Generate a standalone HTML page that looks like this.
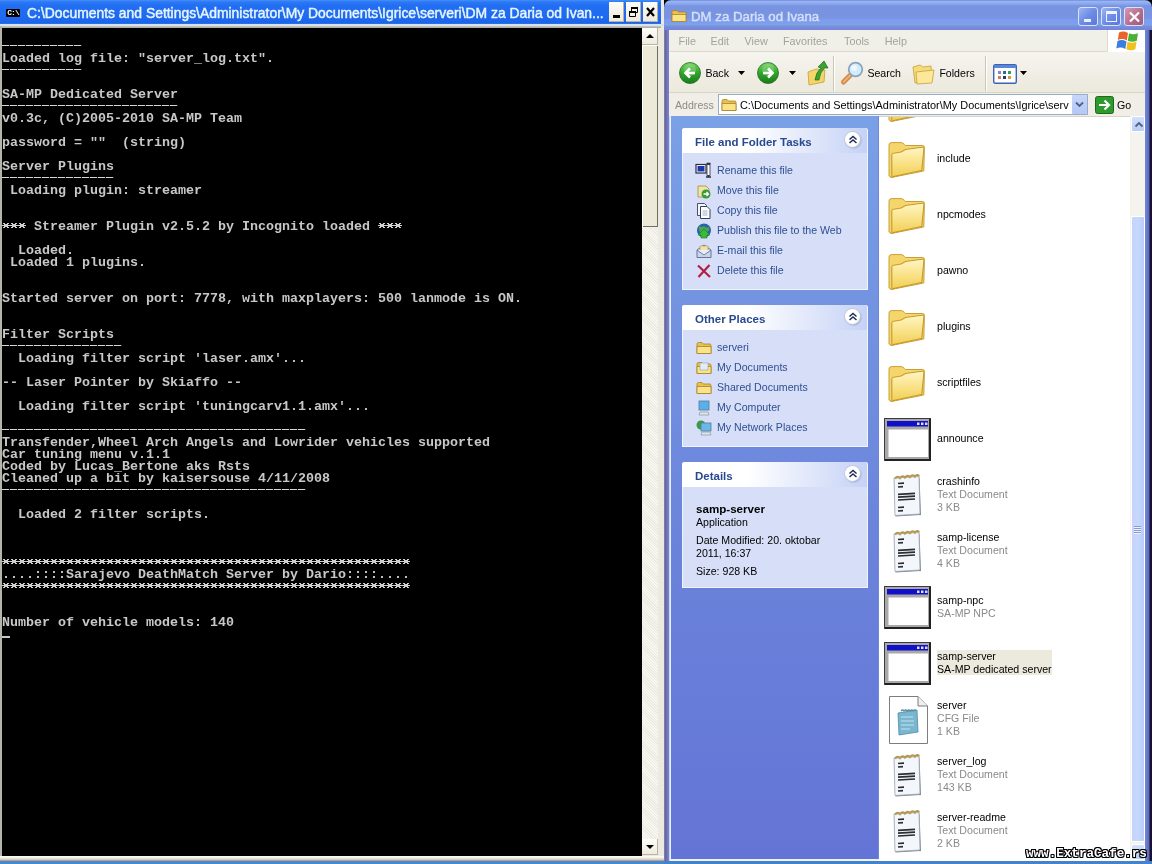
<!DOCTYPE html>
<html><head><meta charset="utf-8">
<style>
*{margin:0;padding:0;box-sizing:border-box}
html,body{width:1152px;height:864px;overflow:hidden;background:#000;position:relative;font-family:"Liberation Sans",sans-serif}
.a{position:absolute}
.gs{will-change:transform}
svg{position:absolute;overflow:visible}
#con{left:0;top:0;width:664px;height:861px;background:#eceae0}
#ctitle{left:0;top:0;width:661px;height:25px;background:linear-gradient(#4590fa 0px,#2c78f6 2px,#226ef2 6px,#1f6af0 16px,#1a64ea 23px,#5a8ee0 25px)}
#ctext{left:27px;top:4.5px;color:#e6f6ff;font-size:13.9px;white-space:nowrap;-webkit-text-stroke:0.45px #e6f6ff}
.cbtn{top:2px;width:15px;height:20px;background:linear-gradient(#fdfcf8,#eee9dc);box-shadow:inset -1px -1px 0 #b8b4a4}
#cscreen{left:2px;top:28px;width:640px;height:828px;background:#000;overflow:hidden}
#ctxt{left:0;top:1px;font-family:"Liberation Mono",monospace;font-size:13.333px;line-height:12px;color:#c8c8c8;white-space:pre;font-weight:bold}
.dash{position:absolute;left:0;height:1px;background:repeating-linear-gradient(90deg,#d4d4d4 0 7px,#303030 7px 8px)}
#cscroll{left:642px;top:28px;width:16px;height:827px;background:repeating-linear-gradient(45deg,#f8f7f2 0 1px,#ecebe2 1px 2px)}
#exp{left:664px;top:0;width:488px;height:861px;background:#6f86d9;will-change:transform}
#etitle{left:0;top:0;width:488px;height:30px;border-radius:7px 7px 0 0;background:linear-gradient(#6f8ad6 0px,#98b4f6 1.5px,#8aa6ec 4px,#7894e0 6px,#7894e0 18px,#809cf2 20px,#809cf2 23px,#78a8da 24px,#78a8da 25px,#7a8ee0 26px,#7482d8 30px)}
#etext{left:27px;top:9px;color:#d4e0f8;font-size:13.25px;white-space:nowrap;-webkit-text-stroke:0.4px #d4e0f8}
.ebtn{top:7px;width:20px;height:19px;border:1px solid #d8e2fa;border-radius:3px;background:linear-gradient(135deg,#9cb6f4 0%,#6c8ce6 50%,#5a78dc 100%)}
#menu{left:5px;top:30px;width:476px;height:22px;background:#f1f0e8;border-bottom:1px solid #dcdad0}
#menu span{position:absolute;top:5px;font-size:10.8px;color:#a3a29b}
#tool{left:5px;top:52px;width:476px;height:41px;background:linear-gradient(#f5f4ee,#ece9dd);border-bottom:1px solid #d8d5c8}
#tool span,#addr span.t{position:absolute;font-size:10.6px;color:#000;white-space:nowrap}
#addr{left:5px;top:93px;width:476px;height:23px;background:#f0eee6}
#lpane{left:5px;top:116px;width:209px;height:745px;background:linear-gradient(#7aa0e6,#6a82da 60%,#6474d6);border-left:1px solid #c8d4f4}
#fview{left:215px;top:116px;width:251px;height:745px;background:#fff;overflow:hidden;border-top:1px solid #d4d4cc}
#escroll{left:466px;top:116px;width:15px;height:745px;background:#f4f3ee}
.panel{left:12px;width:186px;background:#d6dff7;border-radius:3px 3px 0 0;box-shadow:inset 1px 0 #eef6fc,inset -1px 0 #eef6fc,inset 0 -1px #eef6fc}
.phead{left:0;top:0;width:185px;height:25px;background:linear-gradient(90deg,#ffffff 35%,#c5d2f6);border-radius:3px 3px 0 0}
.phead b{position:absolute;left:13px;top:8px;font-size:11.5px;color:#28498f;white-space:nowrap}
.chev{position:absolute;left:163px;top:4px;width:15px;height:15px;border-radius:50%;background:radial-gradient(circle at 45% 40%,#fff 55%,#eef0f8);box-shadow:0 0 0 1px #c4cade,1px 1px 2px #8a94b8}
.item{position:absolute;left:35px;font-size:10.6px;color:#2f4e92;white-space:nowrap}
.fn{position:absolute;left:58px;font-size:10.6px;color:#000;white-space:nowrap;line-height:13px}
.fs{color:#8a8a8a}
</style></head>
<body>
<div id="con" class="a">
  <div id="ctitle" class="a">
    <div class="a" style="left:6px;top:9px;width:14px;height:8px;background:#000;border-radius:1px"></div>
    <div class="a gs" style="left:6px;top:8px;width:14px;color:#fff;font-size:8px;line-height:9px;font-weight:bold;font-family:'Liberation Mono';letter-spacing:-1px;text-align:center">C:\</div>
    <div id="ctext" class="a gs">C:\Documents and Settings\Administrator\My Documents\Igrice\serveri\DM za Daria od Ivan...</div>
    <div class="a cbtn" style="left:609px"><div class="a" style="left:4px;top:13px;width:7px;height:3px;background:#000"></div></div>
    <div class="a cbtn" style="left:626px"><svg width="15" height="20"><path d="M5.5 5.5h6v5h-6z M3.5 9.5h6v5h-6z" fill="none" stroke="#000" stroke-width="1"/><path d="M5 5h7v2h-7zM3 9h7v2h-7z" fill="#000"/></svg></div>
    <div class="a cbtn" style="left:643px"><svg width="15" height="20"><path d="M4 6l7 8M11 6l-7 8" stroke="#000" stroke-width="2.2"/></svg></div>
  </div>
  <div class="a" style="left:0;top:24px;width:664px;height:2px;background:#d8e2f2"></div>
  <div class="a" style="left:0;top:26px;width:661px;height:2px;background:linear-gradient(#c8c8c0,#a8a8a0)"></div>
  <div class="a" style="left:0;top:26px;width:2px;height:830px;background:#b4b4ac"></div>
  <div class="a" style="left:0;top:856px;width:664px;height:6px;background:linear-gradient(#fbfdf8 0,#f4f2e6 25%,#e4d8cc 50%,#c0b4bc 70%,#7080a8 88%,#4a80b8 100%)"></div>
  <div id="cscreen" class="a">
<pre id="ctxt" class="a gs">


Loaded log file: "server_log.txt".


SA-MP Dedicated Server

v0.3c, (C)2005-2010 SA-MP Team

password = ""  (string)

Server Plugins

 Loading plugin: streamer


    Streamer Plugin v2.5.2 by Incognito loaded

  Loaded.
 Loaded 1 plugins.


Started server on port: 7778, with maxplayers: 500 lanmode is ON.


Filter Scripts

  Loading filter script 'laser.amx'...

-- Laser Pointer by Skiaffo --

  Loading filter script 'tuningcarv1.1.amx'...


Transfender,Wheel Arch Angels and Lowrider vehicles supported
Car tuning menu v.1.1
Coded by Lucas_Bertone aks Rsts
Cleaned up a bit by kaisersouse 4/11/2008


  Loaded 2 filter scripts.




....::::Sarajevo DeathMatch Server by Dario::::....



Number of vehicle models: 140
</pre>
    <svg style="left:0;top:528px" width="408" height="36"><defs><pattern id="star" width="8" height="24" patternUnits="userSpaceOnUse"><path d="M1 3h2v1h-2zM5 3h2v1h-2zM2 4h4v1h-4zM0 5h8v1h-8zM2 6h4v1h-4zM1 7h2v1h-2zM5 7h2v1h-2z" fill="#d0d0d0"/></pattern></defs><rect x="0" y="0" width="408" height="36" fill="url(#star)"/></svg>
    <svg style="left:0;top:192px" width="24" height="12"><rect width="24" height="12" fill="url(#star)"/></svg><svg style="left:376px;top:192px" width="24" height="12"><rect width="24" height="12" fill="url(#star)"/></svg>
    <div class="dash" style="top:17px;width:80px"></div>
    <div class="dash" style="top:41px;width:80px"></div>
    <div class="dash" style="top:77px;width:176px"></div>
    <div class="dash" style="top:149px;width:112px"></div>
    <div class="dash" style="top:317px;width:120px"></div>
    <div class="dash" style="top:401px;width:304px"></div>
    <div class="dash" style="top:461px;width:304px"></div>
    <div class="a" style="left:0;top:608px;width:8px;height:2px;background:#c8c8c8"></div>
  </div>
  <div id="cscroll" class="a">
    <div class="a cbtn" style="left:0;top:0;width:16px;height:17px"><svg width="16" height="17"><path d="M4 10h8l-4-4z" fill="#000"/></svg></div>
    <div class="a" style="left:0;top:17px;width:16px;height:182px;background:#ece9d8;box-shadow:inset 1px 1px 0 #fff,inset -1px -1px 0 #716f64"></div>
    <div class="a cbtn" style="left:0;top:811px;width:16px;height:16px"><svg width="16" height="16"><path d="M4 6h8l-4 4z" fill="#000"/></svg></div>
  </div>
</div>
<svg width="0" height="0" style="position:absolute">
<defs>
<linearGradient id="gfold" x1="0" y1="0" x2="0" y2="1"><stop offset="0" stop-color="#fff6c2"/><stop offset="1" stop-color="#f2cf55"/></linearGradient>
<linearGradient id="ggreen" x1="0" y1="0" x2="0" y2="1"><stop offset="0" stop-color="#7ad46a"/><stop offset="0.5" stop-color="#2fa52a"/><stop offset="1" stop-color="#1a7a1a"/></linearGradient>
<symbol id="folder" viewBox="0 0 40 40"><path d="M3 5Q3 2.6 6 2.6L15 2.6Q17 2.6 18.5 4.6L19.5 5.5L36.5 5.5Q38.5 5.5 38.4 7.5L37.8 31L5 37.5L3 36Z" fill="#f5d66c" stroke="#c9a03a" stroke-width="1"/><path d="M5.8 15Q5.8 13.5 7.5 13.3L15 12L19.5 9.5L36.5 7.2Q38 7 37.9 8.5L35.8 30.3L6.2 36.9Q5.8 37 5.8 36Z" fill="url(#gfold)" stroke="#c99b2c" stroke-width="1.1"/></symbol>
<symbol id="app" viewBox="0 0 47 43"><rect x="0.5" y="0.5" width="46" height="42" fill="#a9a9a9" stroke="#3b3b3b"/><rect x="45" y="1" width="2" height="42" fill="#222"/><rect x="1" y="41" width="46" height="2" fill="#222"/><rect x="3" y="3" width="41" height="5.5" fill="#1010c8"/><rect x="33" y="4.5" width="2.5" height="2.5" fill="#ddd"/><rect x="37" y="4.5" width="2.5" height="2.5" fill="#ddd"/><rect x="41" y="4.5" width="2.5" height="2.5" fill="#ddd"/><rect x="4.5" y="11.5" width="39.5" height="27.5" fill="#fff"/></symbol>
<symbol id="note" viewBox="0 0 29 43"><path d="M1.5 5L26.5 3.5L28 41L2.5 42.5Z" fill="#7c8796"/><path d="M1 4L26 2.5L27 40L2 41.5Z" fill="#f3f7fb" stroke="#9aa3ad" stroke-width="0.8"/><path d="M2 4.5q3-3 5-0.5q3-3 5-0.5q3-3 5-0.5q3-3 5-0.5q3-3 4 0" fill="none" stroke="#b59a55" stroke-width="2.2"/><path d="M5 9.5l6-0.3M5 13l5-0.3M5 20.3l17-1M5 23.2l17-1M5 26l17-1M5 33.5l6-0.3M5 37l5-0.3" stroke="#2a2e34" stroke-width="1.7"/></symbol>
<symbol id="cfg" viewBox="0 0 39 48"><path d="M0.5 0.5H29L38.5 10V47.5H0.5Z" fill="#fff" stroke="#7d7d7d"/><path d="M29 0.5V10H38.5" fill="#eee" stroke="#7d7d7d"/><path d="M9 17L28 14L29 36L10 39Z" fill="#7bb6cf" stroke="#4a8aa8" stroke-width="0.8"/><path d="M12 15q2-2 3 0q2-2 3 0q2-2 3 0q2-2 3 0q2-2 3 0" fill="none" stroke="#5a8fa5" stroke-width="1.3"/><path d="M12 21h12M12 25h13M12 29h13M12 33h9" stroke="#c4e2ee" stroke-width="1"/></symbol>
<symbol id="sfold" viewBox="0 0 16 16"><path d="M1 4Q1 2.5 2.5 2.5H6L7.5 4H14Q15 4 15 5.5V13.5H1Z" fill="#e9c14a" stroke="#a8822a" stroke-width="0.8"/><path d="M1 6.5H15V13.5H1Z" fill="#fbe38a" stroke="#a8822a" stroke-width="0.8"/></symbol>
<symbol id="circ" viewBox="0 0 22 22"><circle cx="11" cy="11" r="10.5" fill="url(#ggreen)" stroke="#1f6e1f" stroke-width="0.8"/><circle cx="11" cy="8" r="6" fill="#a8e69a" opacity="0.35"/></symbol>
</defs></svg>
<div id="exp" class="a">
  <div class="a" style="left:0;top:0;width:8px;height:8px;background:#000"></div><div class="a" style="left:480px;top:0;width:8px;height:8px;background:#000"></div>
  <div id="etitle" class="a">
    <svg style="left:7px;top:8px" width="16" height="16"><use href="#sfold" width="16" height="16"/></svg>
    <div id="etext" class="a">DM za Daria od Ivana</div>
    <div class="a ebtn" style="left:414px"><div class="a" style="left:5px;top:11px;width:7px;height:3px;background:#e8f0ff"></div></div>
    <div class="a ebtn" style="left:437px"><div class="a" style="left:4px;top:3px;width:11px;height:11px;border:1px solid #eef3ff;border-top-width:3px"></div></div>
    <div class="a ebtn" style="left:460px;background:linear-gradient(135deg,#d49ab4,#b46a8a 60%,#a05a7c)"><svg width="20" height="19"><path d="M5 4.5l9 9M14 4.5l-9 9" stroke="#fff" stroke-width="2.2"/></svg></div>
  </div>
  <div class="a" style="left:0;top:30px;width:5px;height:831px;background:linear-gradient(90deg,#9a9aa8 0,#62629a 1px,#7a7ccc 4px)"></div>
  <div class="a" style="left:481px;top:30px;width:7px;height:831px;background:linear-gradient(90deg,#7489dc,#5a6ac0 4px,#1a1030 5px)"></div>
  <div id="menu" class="a">
    <span style="left:9.6px">File</span><span style="left:41.5px">Edit</span><span style="left:75.5px">View</span><span style="left:114px">Favorites</span><span style="left:175px">Tools</span><span style="left:215.7px">Help</span>
    <div class="a" style="left:438px;top:0;width:38px;height:22px;background:#fff;border-left:1px solid #dedbcf">
      <svg width="38" height="22"><path d="M11 2.5q4.5-2 9 0.5l-1.2 7.5q-4.5-2.5-9-0.5z" fill="#e8642a"/><path d="M21 3.3q4.5 2 9 0l-1.2 7.5q-4.5 2-9 0z" fill="#4cb034"/><path d="M9.5 11q4.5-2 9 0.5l-1.2 7.5q-4.5-2.5-9-0.5z" fill="#3a7de0"/><path d="M19.5 11.8q4.5 2 9 0l-1.2 7.5q-4.5 2-9 0z" fill="#f0c020"/></svg>
    </div>
  </div>
  <div id="tool" class="a">
    <svg style="left:10px;top:10px" width="22" height="22"><use href="#circ" width="22" height="22"/><path d="M16 11H7M11 6.5L6.5 11L11 15.5" fill="none" stroke="#fff" stroke-width="2.6"/></svg>
    <span style="left:36.4px;top:14.5px">Back</span>
    <svg style="left:69px;top:19px" width="7" height="4"><path d="M0 0h7l-3.5 4z" fill="#000"/></svg>
    <svg style="left:88px;top:10px" width="22" height="22"><use href="#circ" width="22" height="22"/><path d="M6 11H15M11 6.5L15.5 11L11 15.5" fill="none" stroke="#fff" stroke-width="2.6"/></svg>
    <svg style="left:120px;top:19px" width="7" height="4"><path d="M0 0h7l-3.5 4z" fill="#000"/></svg>
    <svg style="left:138px;top:8px" width="22" height="26"><path d="M1 12L9 9L18 10L17 22L2 25Z" fill="#f3d56a" stroke="#c79d35" stroke-width="0.8"/><path d="M8 20Q9 12 14 8L11 7L17 1L21 8L17.5 8Q13 12 12 20Z" fill="#3aa332" stroke="#1b6f1b" stroke-width="0.7"/></svg>
    <div class="a" style="left:164px;top:4px;width:1px;height:35px;background:#c9c6b6;box-shadow:1px 0 0 #fff"></div>
    <svg style="left:171px;top:6px" width="24" height="26"><path d="M3.5 24L10 17.5" stroke="#d08848" stroke-width="5" stroke-linecap="round"/><path d="M3.5 24L10 17.5" stroke="#f0b070" stroke-width="2" stroke-linecap="round"/><circle cx="15.5" cy="11.5" r="6.8" fill="#d4ecfa" stroke="#8aa4c0" stroke-width="1.8"/><circle cx="14" cy="10" r="3" fill="#fff" opacity="0.6"/></svg>
    <span style="left:198.4px;top:14.5px">Search</span>
    <svg style="left:243px;top:11px" width="24" height="22"><path d="M1 4L8 2L11 4L19 3L20 17L3 20Z" fill="#f4dc7c" stroke="#c9a03a" stroke-width="0.8"/><path d="M4 9L22 7L20 20L5 21Z" fill="#fbe89a" stroke="#c9a03a" stroke-width="0.8"/></svg>
    <span style="left:270.4px;top:14.5px">Folders</span>
    <div class="a" style="left:316px;top:4px;width:1px;height:35px;background:#c9c6b6;box-shadow:1px 0 0 #fff"></div>
    <svg style="left:324px;top:12px" width="24" height="20"><rect x="0.7" y="0.7" width="22.6" height="18.6" rx="1.5" fill="#fff" stroke="#3a62b8" stroke-width="1.4"/><rect x="1" y="1" width="22" height="3" fill="#5a86d8"/><rect x="5" y="7" width="3" height="3" fill="#7a8ac8"/><rect x="10" y="7" width="3" height="3" fill="#2a6aa0"/><rect x="15" y="7" width="3" height="3" fill="#3a9a5a"/><rect x="5" y="12" width="3" height="3" fill="#d87a5a"/><rect x="10" y="12" width="3" height="3" fill="#2a3a6a"/><rect x="15" y="12" width="3" height="3" fill="#c8a040"/></svg>
    <svg style="left:351px;top:19px" width="7" height="4"><path d="M0 0h7l-3.5 4z" fill="#000"/></svg>
  </div>
  <div id="addr" class="a">
    <span class="t" style="left:6px;top:6px;color:#8d8c85">Address</span>
    <div class="a" style="left:49px;top:1px;width:370px;height:21px;background:#fff;border:1px solid #98acc4"></div>
    <svg style="left:52px;top:4px" width="16" height="16"><use href="#sfold" width="16" height="16"/></svg>
    <span class="t" style="left:71px;top:5.5px;font-size:10.9px">C:\Documents and Settings\Administrator\My Documents\Igrice\serv</span>
    <div class="a" style="left:403px;top:2px;width:15px;height:19px;background:linear-gradient(#c6d6fb,#b4c8f6);border-radius:1px"><svg width="15" height="19"><path d="M4 7.5L7.5 11L11 7.5" fill="none" stroke="#4d6185" stroke-width="1.8"/></svg></div>
    <svg style="left:426px;top:3px" width="19" height="18"><rect x="0.5" y="0.5" width="18" height="17" rx="2" fill="#2e9a2e" stroke="#1b6a1b"/><path d="M4 9H13M9.5 4.5L14 9L9.5 13.5" fill="none" stroke="#fff" stroke-width="2.2"/></svg>
    <span class="t" style="left:448px;top:5.5px">Go</span>
  </div>
  <div id="lpane" class="a">
    <div class="a" style="left:0;top:0;width:1px;height:745px;background:#e2f4fa"></div><div class="a" style="left:0;top:743px;width:209px;height:2px;background:#eef4fc"></div>
    <div class="a panel" style="top:12px;height:162px">
      <div class="a phead"><b>File and Folder Tasks</b><div class="chev"><svg width="16" height="16"><path d="M4.5 7.5L8 4.5L11.5 7.5M4.5 11L8 8L11.5 11" fill="none" stroke="#1c2c54" stroke-width="1.5"/></svg></div></div>
      <svg style="left:13px;top:35px" width="18" height="16"><rect x="1" y="1.5" width="10" height="8.5" fill="#fff" stroke="#2a2a40" stroke-width="1.2"/><rect x="2.5" y="3" width="7" height="5.5" fill="#1838b0"/><path d="M11.5 0.5h4M13.5 0.5v13M11 14h5" stroke="#2a2a40" stroke-width="1.3"/><rect x="12" y="1.5" width="3" height="11" fill="#fff" stroke="#2a2a40" stroke-width="0.8"/></svg>
      <span class="item" style="top:35.5px">Rename this file</span>
      <svg style="left:14px;top:55px" width="16" height="16"><path d="M2 3h8l3 3v8H2z" fill="#f3e4a0" stroke="#9a8a50" stroke-width="0.8"/><circle cx="10" cy="11" r="4.5" fill="#3a9a3a"/><path d="M7.5 11h5M10.5 9l2 2-2 2" stroke="#fff" stroke-width="1.3" fill="none"/></svg>
      <span class="item" style="top:55.5px">Move this file</span>
      <svg style="left:14px;top:75px" width="16" height="16"><path d="M1.5 0.5h7l2 2v10h-9z" fill="#f4f6fa" stroke="#34405a" stroke-width="0.9"/><path d="M4.5 3.5h6.5l3 3v9h-9.5z" fill="#fff" stroke="#34405a" stroke-width="1"/><path d="M6.5 8h5M6.5 10h5M6.5 12h5" stroke="#8a9ab8" stroke-width="0.8"/></svg>
      <span class="item" style="top:75.5px">Copy this file</span>
      <svg style="left:14px;top:95px" width="16" height="16"><circle cx="8" cy="7.5" r="7" fill="#2a62b0"/><path d="M3 3q3 2 5 0q2 3 5 1q1 4-2 5q-3-1-4 2q-3-1-4-4z" fill="#4aa848"/><path d="M8 6L14 12H11V15H5V12H2Z" fill="#3cb83a" stroke="#1a7a2a" stroke-width="0.6"/></svg>
      <span class="item" style="top:95.5px">Publish this file to the Web</span>
      <svg style="left:14px;top:115px" width="16" height="16"><path d="M1 7L8 2L15 7V14.5H1Z" fill="#c8d4ea" stroke="#5a6a8a" stroke-width="0.9"/><path d="M4 3h8v6H4z" fill="#f4e2a8" stroke="#a89050" stroke-width="0.6"/><path d="M1 7L8 12L15 7" fill="#e8eef8" stroke="#5a6a8a" stroke-width="0.8"/></svg>
      <span class="item" style="top:115.5px">E-mail this file</span>
      <svg style="left:14px;top:135px" width="16" height="16"><path d="M2 2.5L14 14M13.5 2L2.5 14" stroke="#b02040" stroke-width="2.2"/></svg>
      <span class="item" style="top:135.5px">Delete this file</span>
    </div>
    <div class="a panel" style="top:189px;height:142px">
      <div class="a phead"><b>Other Places</b><div class="chev"><svg width="16" height="16"><path d="M4.5 7.5L8 4.5L11.5 7.5M4.5 11L8 8L11.5 11" fill="none" stroke="#1c2c54" stroke-width="1.5"/></svg></div></div>
      <svg style="left:14px;top:35px" width="16" height="16"><use href="#sfold" width="16" height="16"/></svg>
      <span class="item" style="top:35.5px">serveri</span>
      <svg style="left:14px;top:55px" width="16" height="16"><use href="#sfold" width="16" height="16"/><rect x="4" y="3" width="8" height="7" fill="#e4ecf4" stroke="#8aa" stroke-width="0.6"/></svg>
      <span class="item" style="top:55.5px">My Documents</span>
      <svg style="left:14px;top:75px" width="16" height="16"><use href="#sfold" width="16" height="16"/></svg>
      <span class="item" style="top:75.5px">Shared Documents</span>
      <svg style="left:14px;top:95px" width="16" height="16"><rect x="3" y="1" width="10" height="9" fill="#5ab0e8" stroke="#5a7a9a" stroke-width="0.8"/><path d="M4 12h8l1 3H3z" fill="#dde4ea" stroke="#7a8a9a" stroke-width="0.6"/></svg>
      <span class="item" style="top:95.5px">My Computer</span>
      <svg style="left:14px;top:115px" width="16" height="16"><circle cx="5" cy="5" r="4.5" fill="#3a9a4a"/><rect x="5" y="3" width="10" height="8" fill="#6ab8e8" stroke="#5a7a9a" stroke-width="0.8"/><path d="M6 12h8l1 3H5z" fill="#dde4ea" stroke="#7a8a9a" stroke-width="0.6"/></svg>
      <span class="item" style="top:115.5px">My Network Places</span>
    </div>
    <div class="a panel" style="top:346px;height:126px">
      <div class="a phead"><b>Details</b><div class="chev"><svg width="16" height="16"><path d="M4.5 7.5L8 4.5L11.5 7.5M4.5 11L8 8L11.5 11" fill="none" stroke="#1c2c54" stroke-width="1.5"/></svg></div></div>
      <div class="a" style="left:14px;top:40px;font-size:10.6px;line-height:13px;color:#000;white-space:nowrap"><b style="font-size:11.6px">samp-server</b><br>Application<div style="height:5px"></div>Date Modified: 20. oktobar<br>2011, 16:37<div style="height:5px"></div>Size: 928 KB</div>
    </div>
  </div>
  <div id="fview" class="a">
    <svg style="left:7px;top:-33px" width="40" height="40"><use href="#folder" width="40" height="40"/></svg>
    <svg style="left:7px;top:23px" width="40" height="40"><use href="#folder" width="40" height="40"/></svg>
    <span class="fn" style="top:34.5px">include</span>
    <svg style="left:7px;top:79px" width="40" height="40"><use href="#folder" width="40" height="40"/></svg>
    <span class="fn" style="top:90.5px">npcmodes</span>
    <svg style="left:7px;top:135px" width="40" height="40"><use href="#folder" width="40" height="40"/></svg>
    <span class="fn" style="top:146.5px">pawno</span>
    <svg style="left:7px;top:191px" width="40" height="40"><use href="#folder" width="40" height="40"/></svg>
    <span class="fn" style="top:202.5px">plugins</span>
    <svg style="left:7px;top:247px" width="40" height="40"><use href="#folder" width="40" height="40"/></svg>
    <span class="fn" style="top:258.5px">scriptfiles</span>
    <svg style="left:5px;top:301px" width="47" height="43"><use href="#app" width="47" height="43"/></svg>
    <span class="fn" style="top:314.5px">announce</span>
    <svg style="left:14px;top:356.5px" width="29" height="43"><use href="#note" width="29" height="43"/></svg>
    <span class="fn" style="top:357.5px">crashinfo<br><span class="fs">Text Document<br>3 KB</span></span>
    <svg style="left:14px;top:412.5px" width="29" height="43"><use href="#note" width="29" height="43"/></svg>
    <span class="fn" style="top:413.5px">samp-license<br><span class="fs">Text Document<br>4 KB</span></span>
    <svg style="left:5px;top:469px" width="47" height="43"><use href="#app" width="47" height="43"/></svg>
    <span class="fn" style="top:477px">samp-npc<br><span class="fs">SA-MP NPC</span></span>
    <svg style="left:5px;top:525px" width="47" height="43"><use href="#app" width="47" height="43"/></svg>
    <div class="a" style="left:58px;top:533px;width:115px;height:25px;background:#ece9dd"></div>
    <span class="fn" style="top:533px">samp-server<br>SA-MP dedicated server</span>
    <svg style="left:10px;top:579px" width="39" height="48"><use href="#cfg" width="39" height="48"/></svg>
    <span class="fn" style="top:581.5px">server<br><span class="fs">CFG File<br>1 KB</span></span>
    <svg style="left:14px;top:636.5px" width="29" height="43"><use href="#note" width="29" height="43"/></svg>
    <span class="fn" style="top:637.5px">server_log<br><span class="fs">Text Document<br>143 KB</span></span>
    <svg style="left:14px;top:692.5px" width="29" height="43"><use href="#note" width="29" height="43"/></svg>
    <span class="fn" style="top:693.5px">server-readme<br><span class="fs">Text Document<br>2 KB</span></span>
  </div>
  <div id="escroll" class="a">
    <div class="a" style="left:1px;top:0;width:14px;height:16px;background:linear-gradient(#d4e0fc,#b8ccf6);border:1px solid #fff;border-radius:2px"><svg width="14" height="16"><path d="M3.5 9.5L7 6L10.5 9.5" fill="none" stroke="#4d6185" stroke-width="1.8"/></svg></div>
    <div class="a" style="left:1px;top:100px;width:14px;height:626px;background:linear-gradient(90deg,#c4d3fb,#c8d8fc 50%,#b8cdf8);border:1px solid #fff;border-radius:2px"></div>
    <div class="a" style="left:4px;top:410px;width:7px;height:8px;background:repeating-linear-gradient(#8a9ad0 0 1px,#eef2fe 1px 2px)"></div>
    <div class="a" style="left:1px;top:728px;width:14px;height:16px;background:linear-gradient(#d4e0fc,#b8ccf6);border:1px solid #fff;border-radius:2px"></div>
  </div>
</div>
<div class="a" style="left:0;top:862px;width:664px;height:2px;background:#3e8ccc"></div><div class="a" style="left:664px;top:861px;width:488px;height:3px;background:#4482cc"></div>
<div class="a" style="left:1026px;top:847px;font-size:12.6px;font-weight:bold;color:#fff;white-space:nowrap;text-shadow:1px 0 0 #000,-1px 0 0 #000,0 1px 0 #000,0 -1px 0 #000,1px 1px 0 #000,-1px -1px 0 #000,1px -1px 0 #000,-1px 1px 0 #000;font-family:'Liberation Mono'">www.ExtraCafe.rs</div>
</body></html>
